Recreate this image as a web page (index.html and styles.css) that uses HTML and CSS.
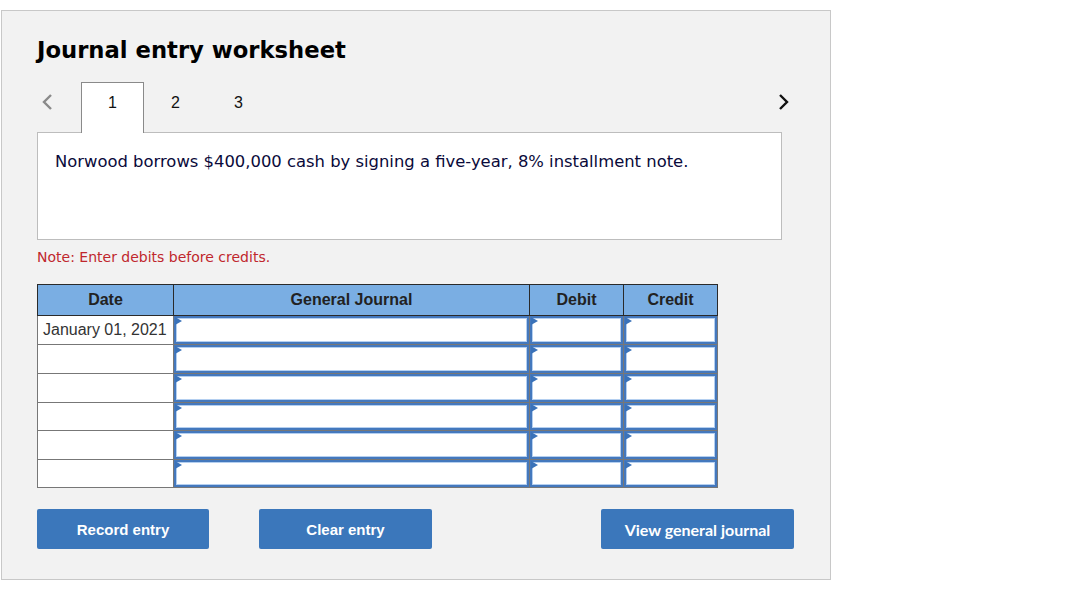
FILE: index.html
```html
<!DOCTYPE html>
<html>
<head>
<meta charset="utf-8">
<link rel="stylesheet" href="styles.css">
</head>
<body>
<div class="panel">
  <h1 class="title">Journal entry worksheet</h1>
  <div class="tabs">
    <span class="arrow prev">
      <svg width="12" height="18" viewBox="0 0 12 18"><path d="M10 2 L3 9 L10 16" fill="none" stroke="#8a8a8a" stroke-width="2.4"/></svg>
    </span>
    <span class="tab active">1</span>
    <span class="tab">2</span>
    <span class="tab">3</span>
    <span class="spacer"></span>
    <span class="arrow next">
      <svg width="12" height="18" viewBox="0 0 12 18"><path d="M2 2 L9 9 L2 16" fill="none" stroke="#111" stroke-width="2.4"/></svg>
    </span>
  </div>
  <div class="question">Norwood borrows $400,000 cash by signing a five-year, 8% installment note.</div>
  <p class="note">Note: Enter debits before credits.</p>
  <table class="journal">
    <colgroup><col class="c-date"><col class="c-gj"><col class="c-amt"><col class="c-amt"></colgroup>
    <thead>
      <tr><th>Date</th><th>General Journal</th><th>Debit</th><th>Credit</th></tr>
    </thead>
    <tbody>
      <tr><td class="date">January 01, 2021</td><td class="in"><div class="box"></div></td><td class="in"><div class="box"></div></td><td class="in"><div class="box"></div></td></tr>
      <tr><td class="date"></td><td class="in"><div class="box"></div></td><td class="in"><div class="box"></div></td><td class="in"><div class="box"></div></td></tr>
      <tr><td class="date"></td><td class="in"><div class="box"></div></td><td class="in"><div class="box"></div></td><td class="in"><div class="box"></div></td></tr>
      <tr class="short"><td class="date"></td><td class="in"><div class="box"></div></td><td class="in"><div class="box"></div></td><td class="in"><div class="box"></div></td></tr>
      <tr><td class="date"></td><td class="in"><div class="box"></div></td><td class="in"><div class="box"></div></td><td class="in"><div class="box"></div></td></tr>
      <tr class="short"><td class="date"></td><td class="in"><div class="box"></div></td><td class="in"><div class="box"></div></td><td class="in"><div class="box"></div></td></tr>
    </tbody>
  </table>
  <div class="buttons">
    <button class="btn record">Record entry</button>
    <button class="btn clear">Clear entry</button>
    <button class="btn view">View general journal</button>
  </div>
</div>
</body>
</html>
```
FILE: styles.css
```css
html, body {
  margin: 0;
  padding: 0;
  background: #ffffff;
}
.panel {
  box-sizing: border-box;
  margin: 10px 0 0 1px;
  width: 830px;
  height: 570px;
  background: #f2f2f2;
  border: 1px solid #c8c8c8;
  padding: 0 0 0 35px;
}
.title {
  margin: 0;
  padding-top: 25px;
  font-family: "DejaVu Sans", Verdana, sans-serif;
  font-weight: bold;
  font-size: 22.7px;
  line-height: 28px;
  color: #000;
}
.tabs {
  display: flex;
  align-items: stretch;
  margin-top: 18px;
  width: 757px;
  height: 50px;
  position: relative;
  z-index: 1;
}
.arrow {
  display: flex;
  align-items: center;
  justify-content: center;
  height: 40px;
}
.prev {
  width: 44px;
  justify-content: flex-start;
  padding-left: 4px;
  box-sizing: border-box;
}
.next {
  width: 20px;
}
.tab {
  box-sizing: border-box;
  width: 63px;
  height: 40px;
  padding-top: 2px;
  display: flex;
  align-items: center;
  justify-content: center;
  font-family: "Liberation Sans", Arial, sans-serif;
  font-size: 16px;
  color: #111;
}
.tab.active {
  height: 51px;
  background: #fff;
  border: 1px solid #8a8a8a;
  border-bottom: none;
  align-items: flex-start;
  padding-top: 11px;
}
.spacer {
  flex: 1;
}
.question {
  box-sizing: border-box;
  width: 745px;
  height: 108px;
  background: #fff;
  border: 1px solid #bdbdbd;
  padding: 18px 0 0 17px;
  font-family: "DejaVu Sans", Verdana, sans-serif;
  font-size: 16.4px;
  line-height: 22px;
  color: #0a0a3a;
}
.note {
  margin: 9px 0 0 0;
  font-family: "DejaVu Sans", Verdana, sans-serif;
  font-size: 14px;
  line-height: 17px;
  color: #c0272d;
}
.journal {
  margin-top: 18px;
  border-collapse: collapse;
  border: 1px solid #777;
  table-layout: fixed;
  width: 680px;
  font-family: "Liberation Sans", Arial, sans-serif;
}
.c-date { width: 136px; }
.c-gj { width: 356px; }
.c-amt { width: 94px; }
.journal th {
  background: #7aaee3;
  border: 1px solid #2a2a2a;
  height: 30px;
  padding: 0;
  font-size: 16px;
  font-weight: bold;
  color: #222;
  text-align: center;
}
.journal td {
  border: 1px solid #777;
  height: 28px;
  padding: 0;
  background: #fff;
}
.journal tr.short td {
  height: 27px;
}
.journal td.date {
  font-size: 16px;
  color: #333;
  padding-left: 5px;
  white-space: nowrap;
}
.journal td.in {
  padding: 0;
  background: #fff;
}
.box {
  position: relative;
  box-sizing: border-box;
  height: 28px;
  border: 2px solid #4478bd;
  box-shadow: inset 0 0 0 1px #b4cff0;
  background: #fff;
}
.short .box {
  height: 27px;
}
.box::before {
  content: "";
  position: absolute;
  left: -1px;
  top: -1px;
  width: 0;
  height: 0;
  border-top: 4px solid transparent;
  border-bottom: 4px solid transparent;
  border-left: 7px solid #3a72b9;
}
.buttons {
  display: flex;
  margin-top: 21px;
}
.btn {
  height: 40px;
  border: none;
  border-radius: 2px;
  background: #3b77bb;
  color: #fff;
  font-family: "Liberation Sans", Arial, sans-serif;
  font-weight: bold;
  font-size: 15px;
  padding: 0;
  cursor: pointer;
}
.record { width: 172px; }
.clear { width: 173px; margin-left: 50px; }
.view {
  width: 193px;
  margin-left: 169px;
  font-family: Lato, "Liberation Sans", sans-serif;
  font-size: 16px;
}
```
